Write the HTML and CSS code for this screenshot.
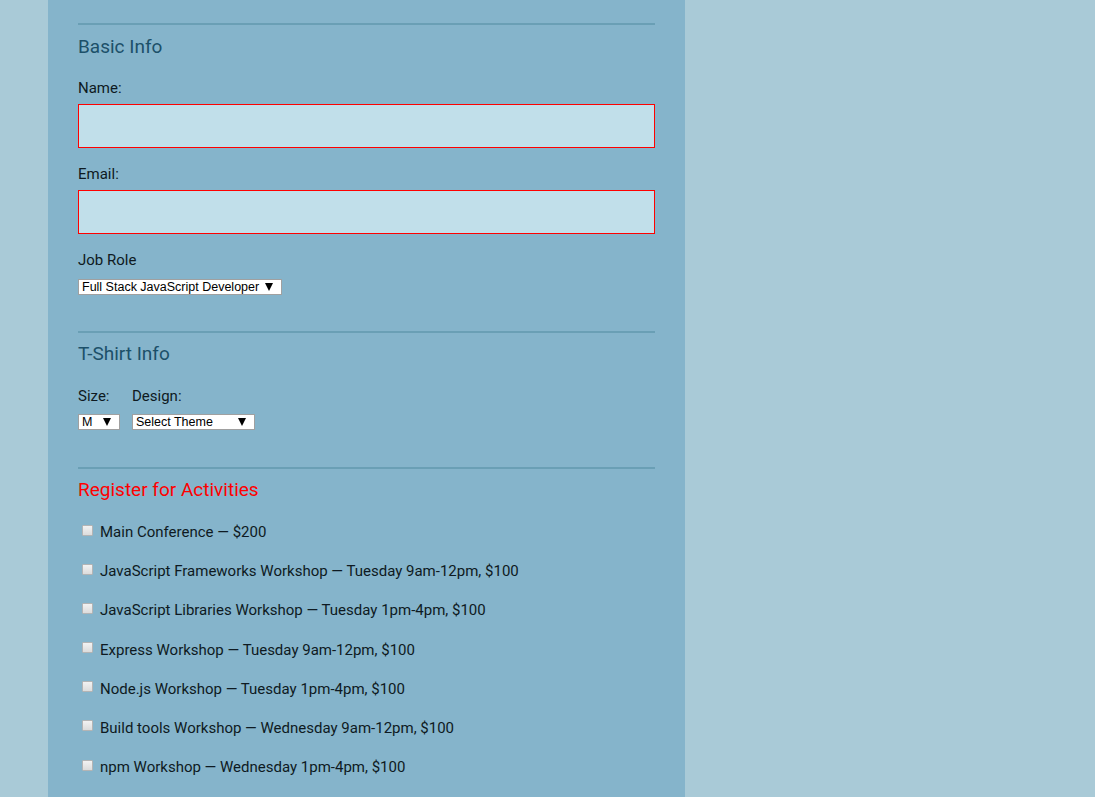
FILE: index.html
```html
<!DOCTYPE html>
<html>
<head>
<meta charset="utf-8">
<link rel="stylesheet" href="styles.css">
</head>
<body>
<div class="page">
  <form class="form">
    <section class="section">
      <h2 class="legend">Basic Info</h2>
      <label class="label" for="name">Name:</label>
      <input class="text-input" id="name" type="text">
      <label class="label" for="mail">Email:</label>
      <input class="text-input" id="mail" type="email">
      <label class="label" for="title">Job Role</label>
      <div class="select-row">
        <select class="select select-role" id="title"><option>Full Stack JavaScript Developer</option></select>
      </div>
    </section>
    <section class="section shirt">
      <h2 class="legend">T-Shirt Info</h2>
      <div class="shirt-row">
        <div class="shirt-col">
          <label class="label" for="size">Size:</label>
          <select class="select select-size" id="size"><option>M</option></select>
        </div>
        <div class="shirt-col">
          <label class="label" for="design">Design:</label>
          <select class="select select-design" id="design"><option>Select Theme</option></select>
        </div>
      </div>
    </section>
    <section class="section activities">
      <h2 class="legend legend-error">Register for Activities</h2>
      <label class="activity"><input class="check" type="checkbox"><span>Main Conference — $200</span></label>
      <label class="activity"><input class="check" type="checkbox"><span>JavaScript Frameworks Workshop — Tuesday 9am-12pm, $100</span></label>
      <label class="activity"><input class="check" type="checkbox"><span>JavaScript Libraries Workshop — Tuesday 1pm-4pm, $100</span></label>
      <label class="activity"><input class="check" type="checkbox"><span>Express Workshop — Tuesday 9am-12pm, $100</span></label>
      <label class="activity"><input class="check" type="checkbox"><span>Node.js Workshop — Tuesday 1pm-4pm, $100</span></label>
      <label class="activity"><input class="check" type="checkbox"><span>Build tools Workshop — Wednesday 9am-12pm, $100</span></label>
      <label class="activity"><input class="check" type="checkbox"><span>npm Workshop — Wednesday 1pm-4pm, $100</span></label>
    </section>
  </form>
</div>
</body>
</html>
```
FILE: styles.css
```css
html, body {
  margin: 0;
  padding: 0;
  background: #a9cad7;
  height: 100%;
  overflow: hidden;
}
body {
  font-family: Roboto, "Liberation Sans", sans-serif;
  color: #0e1a22;
}
.page {
  margin-left: 48px;
  width: 637px;
  min-height: 797px;
  background: #85b4cb;
  box-sizing: border-box;
  padding: 23px 30px 0 30px;
}
.form {
  display: flex;
  flex-direction: column;
}
.section {
  display: flex;
  flex-direction: column;
  align-items: flex-start;
  border-top: 2px solid #6a9fb5;
  padding-top: 10px;
  padding-bottom: 36px;
}
.legend {
  margin: 0 0 19px 0;
  font-size: 19px;
  font-weight: 400;
  line-height: 24px;
  color: #1c5069;
}
.legend-error {
  color: #ff0000;
}
.label {
  display: block;
  font-size: 15px;
  line-height: 20px;
  margin-bottom: 6px;
}
.text-input {
  display: block;
  width: 577px;
  height: 44px;
  box-sizing: border-box;
  margin: 0 0 16px 0;
  border: 1px solid #ff0000;
  background: #c1dfea;
  outline: none;
}
.select-row {
  padding-top: 3px;
}
.select {
  -webkit-appearance: none;
  appearance: none;
  display: block;
  height: 16px;
  box-sizing: border-box;
  margin: 0;
  padding: 0 0 0 3px;
  border: 1px solid #a0a0a0;
  border-radius: 0;
  background: #ffffff url("data:image/svg+xml;utf8,<svg xmlns='http://www.w3.org/2000/svg' width='8' height='8'><path d='M0 0H8L4 8Z' fill='black'/></svg>") no-repeat right 8px center;
  font-family: "Liberation Sans", Arial, sans-serif;
  font-size: 12.5px;
  line-height: 14px;
  color: #000;
}
.select-role { width: 204px; }
.select-size { width: 42px; }
.select-design { width: 123px; }
.shirt {
  padding-top: 9px;
  padding-bottom: 37px;
}
.shirt .legend {
  margin-bottom: 20px;
}
.shirt-row {
  display: flex;
  gap: 12px;
}
.shirt-col {
  display: flex;
  flex-direction: column;
  align-items: flex-start;
}
.shirt-col .label {
  margin-bottom: 8px;
}
.activities {
  padding-top: 9px;
}
.activities .legend {
  margin-bottom: 20px;
}
.activity {
  display: flex;
  align-items: center;
  font-size: 15px;
  line-height: 20px;
  margin-bottom: 19.2px;
}
.check {
  -webkit-appearance: none;
  appearance: none;
  width: 11px;
  height: 11px;
  box-sizing: border-box;
  margin: 0 7px 4px 4px;
  border: 1px solid #b4b4b4;
  border-radius: 1px;
  background: linear-gradient(#f2f2f2, #dcdcdc);
}
```
